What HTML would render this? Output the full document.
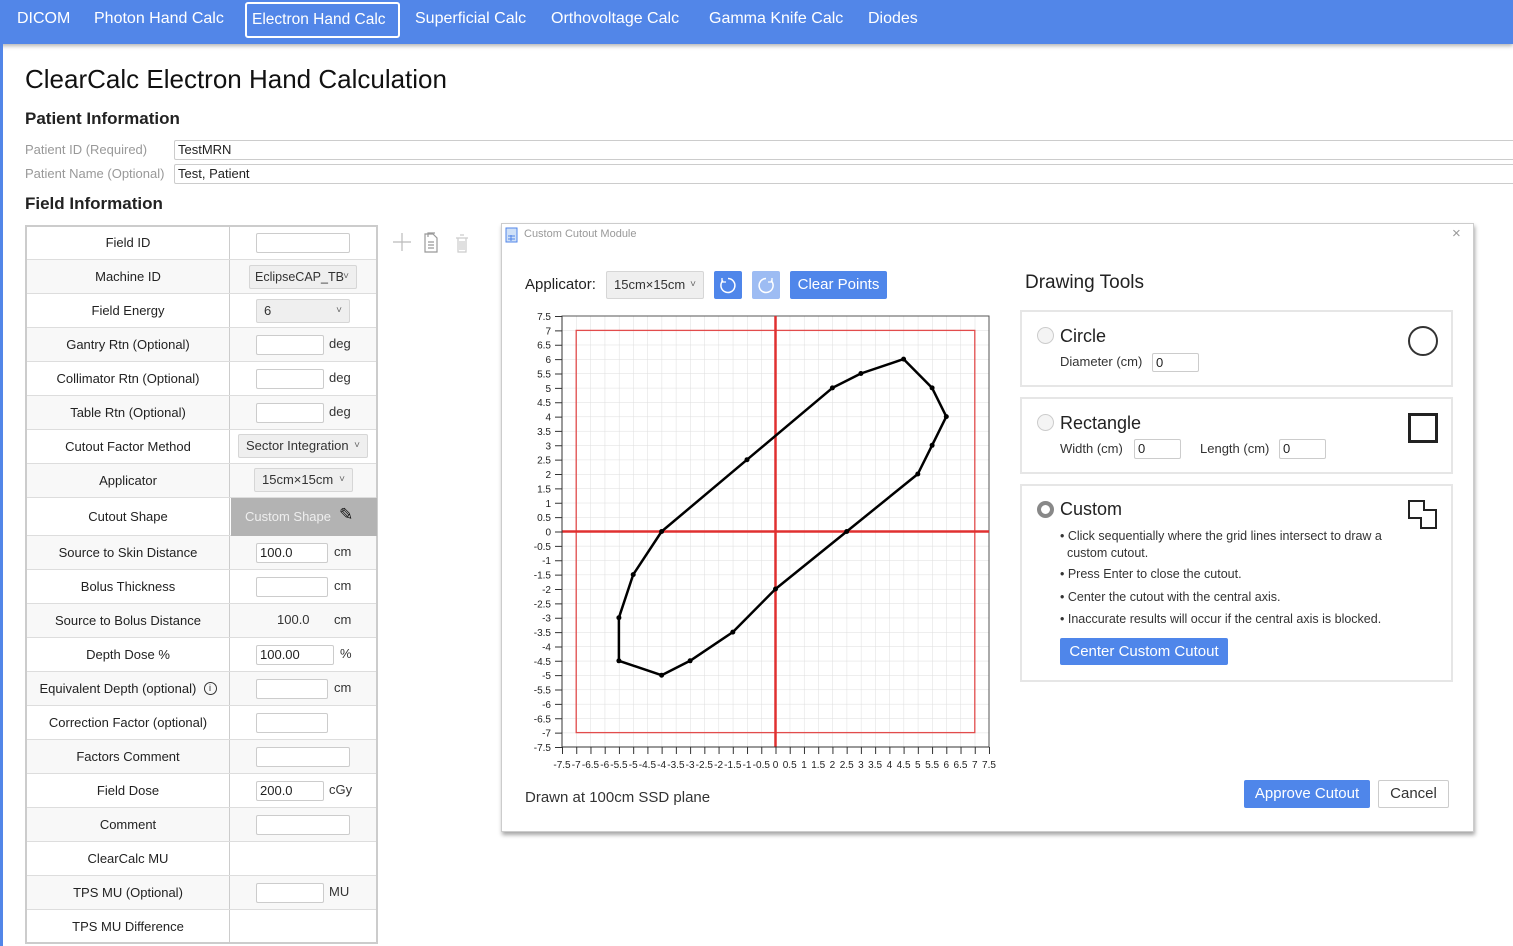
<!DOCTYPE html>
<html><head><meta charset="utf-8"><style>
*{box-sizing:border-box;margin:0;padding:0}
body{width:1513px;height:946px;overflow:hidden;background:#fff;font-family:"Segoe UI","Liberation Sans",sans-serif;color:#222;position:relative}
.a{position:absolute}
.nav{left:0;top:0;width:1513px;height:44px;background:#5286e8;box-shadow:0 2px 4px rgba(0,0,0,.3)}
.nav span{position:absolute;top:10px;color:#fff;font-size:16px;white-space:nowrap}
.inp{position:absolute;border:1px solid #ccc;background:#fff;height:20px;font-size:13px;padding-left:3px;line-height:18px;border-radius:2px}
.sel{position:absolute;border:1px solid #d6d6d6;background:#efefef;height:24px;font-size:13px;padding-left:7px;line-height:22px;border-radius:2px;color:#333;white-space:nowrap}
.sel:after{content:"˅";position:absolute;right:7px;top:0;font-size:10px;color:#666}
.row{position:absolute;left:27px;width:349px;border-bottom:1px solid #ddd}
.row .l{position:absolute;left:0;width:203px;height:100%;display:flex;align-items:center;justify-content:center;font-size:13px;color:#222;border-right:1px solid #ccc}
.unit{position:absolute;font-size:13px;color:#333}
.btn{position:absolute;background:#4f86ea;color:#fff;font-size:14px;text-align:center;border-radius:2px}
.box{position:absolute;left:1020px;width:433px;border:2px solid #e6e6e6}
.radio{position:absolute;width:17px;height:17px;border-radius:50%;border:1px solid #ccc;background:#f4f4f4}
.t13{font-size:13px;color:#333;position:absolute;white-space:nowrap}
</style></head><body>
<div class="a nav">
<span style="left:17px">DICOM</span>
<span style="left:94px">Photon Hand Calc</span>
<span style="left:245px;top:2px;height:36px;width:155px;border:2px solid #fff;border-radius:3px;padding:7px 0 0 5px;font-size:15.5px">Electron Hand Calc</span>
<span style="left:415px">Superficial Calc</span>
<span style="left:551px">Orthovoltage Calc</span>
<span style="left:709px">Gamma Knife Calc</span>
<span style="left:868px">Diodes</span>
</div>
<div class="a" style="left:0;top:44px;width:3px;height:902px;background:#5286e8"></div>
<div class="a" style="left:25px;top:64px;font-size:26px;color:#111;font-weight:500">ClearCalc Electron Hand Calculation</div>
<div class="a" style="left:25px;top:109px;font-size:17px;font-weight:600">Patient Information</div>
<div class="a" style="left:25px;top:142px;font-size:13px;color:#999">Patient ID (Required)</div>
<div class="a" style="left:25px;top:166px;font-size:13px;color:#999">Patient Name (Optional)</div>
<div class="inp" style="left:174px;top:140px;width:1345px">TestMRN</div>
<div class="inp" style="left:174px;top:164px;width:1345px">Test, Patient</div>
<div class="a" style="left:25px;top:194px;font-size:17px;font-weight:600">Field Information</div>

<div class="row" style="top:226px;height:34px"><div class="l">Field ID</div></div>
<div class="row" style="top:260px;height:34px;background:#f8f8f8"><div class="l">Machine ID</div></div>
<div class="row" style="top:294px;height:34px"><div class="l">Field Energy</div></div>
<div class="row" style="top:328px;height:34px;background:#f8f8f8"><div class="l">Gantry Rtn (Optional)</div></div>
<div class="row" style="top:362px;height:34px"><div class="l">Collimator Rtn (Optional)</div></div>
<div class="row" style="top:396px;height:34px;background:#f8f8f8"><div class="l">Table Rtn (Optional)</div></div>
<div class="row" style="top:430px;height:34px"><div class="l">Cutout Factor Method</div></div>
<div class="row" style="top:464px;height:34px;background:#f8f8f8"><div class="l">Applicator</div></div>
<div class="row" style="top:498px;height:38px"><div class="l">Cutout Shape</div></div>
<div class="row" style="top:536px;height:34px;background:#f8f8f8"><div class="l">Source to Skin Distance</div></div>
<div class="row" style="top:570px;height:34px"><div class="l">Bolus Thickness</div></div>
<div class="row" style="top:604px;height:34px;background:#f8f8f8"><div class="l">Source to Bolus Distance</div></div>
<div class="row" style="top:638px;height:34px"><div class="l">Depth Dose %</div></div>
<div class="row" style="top:672px;height:34px;background:#f8f8f8"><div class="l">Equivalent Depth (optional)&nbsp;&nbsp;<span style="display:inline-block;width:13px;height:13px;border:1px solid #333;border-radius:50%;font-size:9px;text-align:center;line-height:11px">i</span></div></div>
<div class="row" style="top:706px;height:34px"><div class="l">Correction Factor (optional)</div></div>
<div class="row" style="top:740px;height:34px;background:#f8f8f8"><div class="l">Factors Comment</div></div>
<div class="row" style="top:774px;height:34px"><div class="l">Field Dose</div></div>
<div class="row" style="top:808px;height:34px;background:#f8f8f8"><div class="l">Comment</div></div>
<div class="row" style="top:842px;height:34px"><div class="l">ClearCalc MU</div></div>
<div class="row" style="top:876px;height:34px;background:#f8f8f8"><div class="l">TPS MU (Optional)</div></div>
<div class="row" style="top:910px;height:33px;border:none"><div class="l">TPS MU Difference</div></div>
<div class="a" style="left:25px;top:225px;width:353px;height:719px;border:2px solid #ccc"></div>

<div class="inp" style="left:256px;top:233px;width:94px"></div>
<div class="sel" style="left:249px;top:265px;width:108px;padding-left:5px;font-size:12.5px">EclipseCAP_TB&nbsp;</div>
<div class="sel" style="left:256px;top:299px;width:94px">6</div>
<div class="inp" style="left:256px;top:335px;width:68px"></div><div class="unit" style="left:329px;top:336px">deg</div>
<div class="inp" style="left:256px;top:369px;width:68px"></div><div class="unit" style="left:329px;top:370px">deg</div>
<div class="inp" style="left:256px;top:403px;width:68px"></div><div class="unit" style="left:329px;top:404px">deg</div>
<div class="sel" style="left:238px;top:434px;width:130px">Sector Integration</div>
<div class="sel" style="left:254px;top:468px;width:99px">15cm×15cm</div>
<div class="a" style="left:231px;top:498px;width:146px;height:38px;background:#b3b3b3;color:#eee;font-size:13px;padding:11px 0 0 14px">Custom Shape<span style="position:absolute;left:108px;top:7px;color:#111;font-size:17px">✎</span></div>
<div class="inp" style="left:256px;top:543px;width:72px">100.0</div><div class="unit" style="left:334px;top:544px">cm</div>
<div class="inp" style="left:256px;top:577px;width:72px"></div><div class="unit" style="left:334px;top:578px">cm</div>
<div class="unit" style="left:277px;top:612px">100.0</div><div class="unit" style="left:334px;top:612px">cm</div>
<div class="inp" style="left:256px;top:645px;width:78px">100.00</div><div class="unit" style="left:340px;top:646px">%</div>
<div class="inp" style="left:256px;top:679px;width:72px"></div><div class="unit" style="left:334px;top:680px">cm</div>
<div class="inp" style="left:256px;top:713px;width:72px"></div>
<div class="inp" style="left:256px;top:747px;width:94px"></div>
<div class="inp" style="left:256px;top:781px;width:68px">200.0</div><div class="unit" style="left:329px;top:782px">cGy</div>
<div class="inp" style="left:256px;top:815px;width:94px"></div>
<div class="inp" style="left:256px;top:883px;width:68px"></div><div class="unit" style="left:329px;top:884px">MU</div>

<svg class="a" style="left:390px;top:228px" width="85" height="28"><path d="M12 5V23M3 14H21" stroke="#bbb" stroke-width="1.2"/><path d="M35 6h8l4 4v14h-12zM38 9v-4h7M38 14h6M38 17h6M38 20h6" fill="none" stroke="#999" stroke-width="1.2"/><path d="M66 10h12M68 10v14h8V10M70 7h4M70 13v9M72 13v9M74 13v9" fill="none" stroke="#ccc" stroke-width="1.2"/></svg>

<div class="a" style="left:501px;top:223px;width:973px;height:609px;background:#fff;border:1px solid #ccc;box-shadow:1px 3px 4px rgba(0,0,0,.35)"></div>
<svg class="a" style="left:505px;top:227px" width="14" height="16"><rect x="1" y="1" width="11" height="14" fill="#cfe0f7" stroke="#5286e8"/><path d="M3 9h7M3 12h7M6 8v6" stroke="#5286e8"/></svg>
<div class="a" style="left:524px;top:228px;font-size:11px;color:#999">Custom Cutout Module</div>
<div class="a" style="left:1452px;top:225px;font-size:15px;color:#999">×</div>
<div class="a" style="left:525px;top:276px;font-size:15px">Applicator:</div>
<div class="sel" style="left:606px;top:271px;width:98px;height:28px;line-height:26px">15cm×15cm</div>
<div class="btn" style="left:714px;top:271px;width:28px;height:28px"><svg width="28" height="28"><path d="M9 9.5A7 7 0 1 0 14 7.5" fill="none" stroke="#fff" stroke-width="1.5"/><path d="M8 7v4h4" fill="none" stroke="#fff" stroke-width="1.3"/></svg></div>
<div class="btn" style="left:752px;top:271px;width:28px;height:28px;background:#9dbcf3"><svg width="28" height="28"><path d="M19 9.5A7 7 0 1 1 14 7.5" fill="none" stroke="#fff" stroke-width="1.5"/><path d="M20 7v4h-4" fill="none" stroke="#fff" stroke-width="1.3"/></svg></div>
<div class="btn" style="left:790px;top:271px;width:97px;height:28px;line-height:28px;font-size:15px">Clear Points</div>

<svg class="a" style="left:0;top:0" width="1513" height="946">
<defs><pattern id="g" x="562" y="316" width="14.233" height="14.367" patternUnits="userSpaceOnUse"><path d="M0 0V14.367M0 0H14.233" stroke="#ddd" stroke-width="1"/></pattern></defs>
<rect x="562" y="316" width="427" height="431" fill="url(#g)"/>
<rect x="562" y="316" width="427" height="431" fill="none" stroke="#555" stroke-width="1"/>
<rect x="576.2" y="330.4" width="398.6" height="402.2" fill="none" stroke="#e24c4c" stroke-width="1.3"/>
<path d="M775.5 316V747M562 531.5H989" stroke="#e03030" stroke-width="2.5"/>
<path d="M562 750.5H990" stroke="#333" stroke-width="7" stroke-dasharray="1 13.233"/>
<path d="M558.5 316V748" stroke="#333" stroke-width="7" stroke-dasharray="1 13.367"/>
<path d="M562 747H989M562 316V747" stroke="#333"/>
<polygon points="661.6,531.5 747,459.7 832.4,387.9 860.9,373.5 903.6,359.1 932.1,387.9 946.3,416.6 932.1,445.3 917.8,474 846.7,531.5 775.5,589 732.8,632.1 690.1,660.8 661.6,675.2 618.9,660.8 618.9,617.7 633.2,574.6" fill="none" stroke="#000" stroke-width="2.5" stroke-linejoin="round"/>
<g fill="#000"><circle cx="661.6" cy="531.5" r="2.5"/><circle cx="747" cy="459.7" r="2.5"/><circle cx="832.4" cy="387.9" r="2.5"/><circle cx="860.9" cy="373.5" r="2.5"/><circle cx="903.6" cy="359.1" r="2.5"/><circle cx="932.1" cy="387.9" r="2.5"/><circle cx="946.3" cy="416.6" r="2.5"/><circle cx="932.1" cy="445.3" r="2.5"/><circle cx="917.8" cy="474" r="2.5"/><circle cx="846.7" cy="531.5" r="2.5"/><circle cx="775.5" cy="589" r="2.5"/><circle cx="732.8" cy="632.1" r="2.5"/><circle cx="690.1" cy="660.8" r="2.5"/><circle cx="661.6" cy="675.2" r="2.5"/><circle cx="618.9" cy="660.8" r="2.5"/><circle cx="618.9" cy="617.7" r="2.5"/><circle cx="633.2" cy="574.6" r="2.5"/></g>
<g font-family="Liberation Sans Narrow, Liberation Sans, sans-serif" font-size="10" fill="#222" text-anchor="end">
<text x="551" y="320">7.5</text><text x="551" y="334.4">7</text><text x="551" y="348.7">6.5</text><text x="551" y="363.1">6</text><text x="551" y="377.5">5.5</text><text x="551" y="391.8">5</text><text x="551" y="406.2">4.5</text><text x="551" y="420.6">4</text><text x="551" y="434.9">3.5</text><text x="551" y="449.3">3</text><text x="551" y="463.7">2.5</text><text x="551" y="478">2</text><text x="551" y="492.4">1.5</text><text x="551" y="506.8">1</text><text x="551" y="521.1">0.5</text><text x="551" y="535.5">0</text><text x="551" y="549.9">-0.5</text><text x="551" y="564.2">-1</text><text x="551" y="578.6">-1.5</text><text x="551" y="593">-2</text><text x="551" y="607.3">-2.5</text><text x="551" y="621.7">-3</text><text x="551" y="636.1">-3.5</text><text x="551" y="650.4">-4</text><text x="551" y="664.8">-4.5</text><text x="551" y="679.2">-5</text><text x="551" y="693.5">-5.5</text><text x="551" y="707.9">-6</text><text x="551" y="722.3">-6.5</text><text x="551" y="736.6">-7</text><text x="551" y="751">-7.5</text>
</g>
<g font-family="Liberation Sans Narrow, Liberation Sans, sans-serif" font-size="10" fill="#222" text-anchor="middle">
<text x="562" y="768">-7.5</text><text x="576.2" y="768">-7</text><text x="590.5" y="768">-6.5</text><text x="604.7" y="768">-6</text><text x="618.9" y="768">-5.5</text><text x="633.2" y="768">-5</text><text x="647.4" y="768">-4.5</text><text x="661.6" y="768">-4</text><text x="675.9" y="768">-3.5</text><text x="690.1" y="768">-3</text><text x="704.3" y="768">-2.5</text><text x="718.6" y="768">-2</text><text x="732.8" y="768">-1.5</text><text x="747" y="768">-1</text><text x="761.3" y="768">-0.5</text><text x="775.5" y="768">0</text><text x="789.7" y="768">0.5</text><text x="804" y="768">1</text><text x="818.2" y="768">1.5</text><text x="832.4" y="768">2</text><text x="846.7" y="768">2.5</text><text x="860.9" y="768">3</text><text x="875.1" y="768">3.5</text><text x="889.4" y="768">4</text><text x="903.6" y="768">4.5</text><text x="917.8" y="768">5</text><text x="932.1" y="768">5.5</text><text x="946.3" y="768">6</text><text x="960.5" y="768">6.5</text><text x="974.8" y="768">7</text><text x="989" y="768">7.5</text>
</g>
</svg>
<div class="a" style="left:525px;top:789px;font-size:15px;color:#333">Drawn at 100cm SSD plane</div>

<div class="a" style="left:1025px;top:272px;font-size:19px;font-weight:500">Drawing Tools</div>
<div class="box" style="top:310px;height:77px"></div>
<div class="radio" style="left:1037px;top:327px"></div>
<div class="a" style="left:1060px;top:326px;font-size:18px">Circle</div>
<div class="t13" style="left:1060px;top:354px">Diameter (cm)</div>
<div class="inp" style="left:1152px;top:353px;width:47px;height:19px">0</div>
<div class="a" style="left:1408px;top:326px;width:30px;height:30px;border:2px solid #333;border-radius:50%"></div>
<div class="box" style="top:397px;height:77px"></div>
<div class="radio" style="left:1037px;top:414px"></div>
<div class="a" style="left:1060px;top:413px;font-size:18px">Rectangle</div>
<div class="t13" style="left:1060px;top:441px">Width (cm)</div>
<div class="inp" style="left:1134px;top:439px;width:47px;height:20px">0</div>
<div class="t13" style="left:1200px;top:441px">Length (cm)</div>
<div class="inp" style="left:1279px;top:439px;width:47px;height:20px">0</div>
<div class="a" style="left:1408px;top:413px;width:30px;height:30px;border:3px solid #222"></div>
<div class="box" style="top:484px;height:198px"></div>
<div class="a" style="left:1037px;top:501px;width:17px;height:17px;border-radius:50%;border:4px solid #888;background:#fff"></div>
<div class="a" style="left:1060px;top:499px;font-size:18px">Custom</div>
<svg class="a" style="left:1406px;top:498px" width="34" height="34"><path d="M3 3H18V12H30V30H15V20H3Z" fill="none" stroke="#222" stroke-width="2"/></svg>
<div class="t13" style="left:1060px;top:528px;font-size:12.5px;line-height:17px">• Click sequentially where the grid lines intersect to draw a<br>&nbsp;&nbsp;custom cutout.</div>
<div class="t13" style="left:1060px;top:567px;font-size:12.5px">• Press Enter to close the cutout.</div>
<div class="t13" style="left:1060px;top:590px;font-size:12.5px">• Center the cutout with the central axis.</div>
<div class="t13" style="left:1060px;top:612px;font-size:12.5px">• Inaccurate results will occur if the central axis is blocked.</div>
<div class="btn" style="left:1060px;top:638px;width:168px;height:27px;line-height:27px;font-size:15px">Center Custom Cutout</div>

<div class="btn" style="left:1244px;top:780px;width:126px;height:28px;line-height:28px;font-size:15px">Approve Cutout</div>
<div class="a" style="left:1378px;top:780px;width:71px;height:28px;border:1px solid #ccc;font-size:15px;text-align:center;line-height:26px;color:#333;border-radius:2px">Cancel</div>
</body></html>
